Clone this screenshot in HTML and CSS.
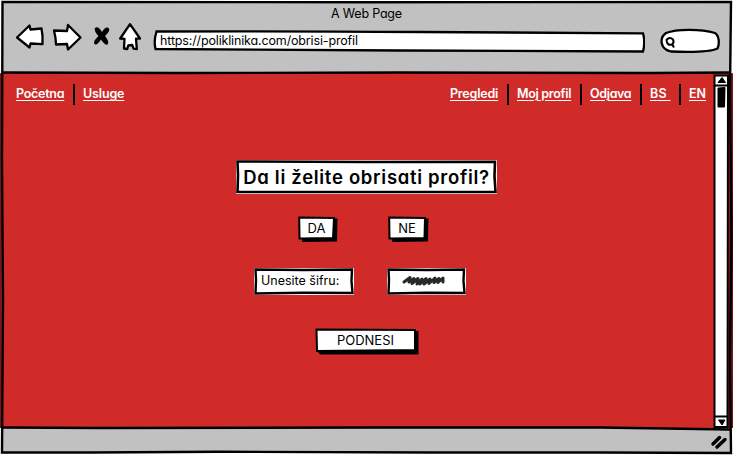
FILE: index.html
```html
<!DOCTYPE html>
<html lang="bs">
<head>
<meta charset="utf-8">
<title>A Web Page</title>
<link rel="stylesheet" href="styles.css">
</head>
<body>
<div class="window">
  <header class="chrome">
    <div class="title">A Web Page</div>
    <div class="toolbar">
      <svg class="tools" width="128" height="32" viewBox="15 21 128 32">
        <g fill="#fff" stroke="#000" stroke-width="2.300" stroke-linejoin="round">
          <path d="M17 37.500 29.500 25.500 30.500 29.500 41.500 28.500 42.500 36 42.500 44.200 30.500 43.500 29.500 47.500Q24 43 17 37.500Z"/>
          <path d="M54 30.500 67 31 68 25 80.500 37.500 68 49.500 67 44 56 44.500 55.500 38Z"/>
          <path d="M130 24.200 140 38.500 136 38.700 136.800 49 133.500 48.700 132.200 45 128.300 45.300 127.300 49 124 48.500 124.500 38.800 120.200 38.500Z"/>
        </g>
        <path d="M95 28C97 26 99.500 27.500 102 32C104 28.500 107 26 109 28.500C110 31 107.500 33.500 105 36C107 38.500 109.500 42 107.500 44.500C105.500 45.500 103 42.500 101 39.500C99 42.500 96 46 94.500 44C93 41.500 96 38.500 98.500 36C96 33.500 94 30 95 28Z"/>
      </svg>
      <div class="address">
        <svg class="frame" width="492" height="23" viewBox="153 30 492 23"><path d="M156.500 31.500 Q280 31 420 32 T643 33.300 Q645.500 42 643 51.500 Q520 51 400 50.500 T155.500 49 Q153.500 41 156.500 31.500Z" fill="#fff" stroke="#000" stroke-width="2.300"/></svg>
        <span class="url">https://poliklinika.com/obrisi-profil</span>
      </div>
      <svg class="search" width="60" height="26" viewBox="660 28 60 26">
        <path d="M666 33C676 29 700 28.500 715 33C719.500 36 719.500 44 717.500 48.500C708 53 683 52 671 51.500C660 49 659 38 666 33Z" fill="#fff" stroke="#000" stroke-width="2.300"/>
        <path d="M666.500 40Q669.500 36.500 673 39.500Q674.500 42.500 672 44.500Q667 46 666.500 40ZM672 44 674 47.500" fill="none" stroke="#000" stroke-width="2"/>
      </svg>
    </div>
  </header>
  <main class="page">
    <div class="content">
      <nav class="nav">
        <div class="group"><a class="pocetna">Početna</a><a class="usluge">Usluge</a></div>
        <div class="group"><a class="pregledi">Pregledi</a><a class="profil">Moj profil</a><a class="odjava">Odjava</a><a class="bs">BS&nbsp;</a><a class="en">EN</a></div>
      </nav>
      <section class="form">
        <div class="box heading">
          <svg class="frame" width="261" height="34" viewBox="0 0 261 34"><path d="M0 0H261V34H0Z" fill="#fff"/><path d="M1.500 1.500 130 2 259 1.800 258.500 16 259.500 32 130 32 1.500 32 2 15Z" fill="#fff" stroke="#000" stroke-width="2.600"/></svg>
          <h1>Da li želite obrisati profil?</h1>
        </div>
        <div class="row choices">
          <button class="box da"><svg class="frame" width="40" height="26" viewBox="0 0 40 26"><path d="M4 3 39.500 2.500 39 25.500 4 26Z"/><path d="M1.200 1.500 36 2 35 22 1.500 22.500Z" fill="#fff" stroke="#000" stroke-width="2"/></svg><span>DA</span></button>
          <button class="box ne"><svg class="frame" width="41" height="26" viewBox="0 0 41 26"><path d="M4 3 40.500 2.500 40 25.500 4 26Z"/><path d="M1.200 1.500 37 2 36.500 22 1.500 22.500Z" fill="#fff" stroke="#000" stroke-width="2"/></svg><span>NE</span></button>
        </div>
        <div class="row fields">
          <label class="box label"><svg class="frame" width="100" height="27" viewBox="0 0 100 27"><path d="M0 0H100V27H0Z" fill="#fff"/><path d="M1.500 1.500 50 2 98 1.500 97.500 13 98.500 25 50 24.800 1.500 25.500 2 12Z" fill="#fff" stroke="#000" stroke-width="2.400"/></svg><span>Unesite šifru:</span></label>
          <div class="box secret"><svg class="frame" width="79" height="27" viewBox="0 0 79 27"><path d="M0 0H79V27H0Z" fill="#fff"/><path d="M1.500 1.500 40 2 77 1.500 76.500 13 77.500 25 40 24.800 1.500 25.500 2 12Z" fill="#fff" stroke="#000" stroke-width="2.400"/><path d="M17 14 23 9.500 22 14 27 10.500 25 15.500 31 10.500 30 16 35 11 33 16 39 10.500 37 16 43 11 42 15.500 48 10 47 14.500 52 10.500 51 14.500 56 10 56 14" fill="none" stroke="#292929" stroke-width="3" stroke-linecap="round" stroke-linejoin="round"/></svg></div>
        </div>
        <button class="box submit"><svg class="frame" width="104" height="27" viewBox="0 0 104 27"><path d="M4 3 103.500 3 103.500 26.500 5 26.500 3 24Z"/><path d="M1.500 1.500 100 2 100 22 52 22.500 2 23Z" fill="#fff" stroke="#000" stroke-width="2"/></svg><span>PODNESI</span></button>
      </section>
    </div>
    <svg class="scrollbar" width="20" height="355" viewBox="713 73 20 355">
      <path d="M730 74H733V428H728Z" fill="#7c1518"/>
      <path d="M714.500 75.500H728L727.500 427H714.500Z" fill="#fff" stroke="#000" stroke-width="2"/>
      <path d="M714.500 85.500H728M714.500 416.500H728" stroke="#000" stroke-width="2"/>
      <path d="M718 82.500 722 77.500 725.500 82.500ZM718.500 420H725L722 425Z" stroke="#000"/>
      <path d="M718.500 88.500 724.500 88 724 106.500 718.500 106.500Z" stroke="#000" stroke-width="2" stroke-linejoin="round"/>
    </svg>
  </main>
  <footer class="status"><svg width="18" height="16" viewBox="710 434 18 16"><path d="M713 444 719.500 437.500M717 447 725 439.500" stroke="#000" stroke-width="3.500" stroke-linecap="round"/></svg></footer>
  <svg class="outline" width="733" height="455" viewBox="0 0 733 455">
    <path d="M0 74H1.500V428H0Z" fill="#7c1518"/>
    <g fill="none" stroke="#000" stroke-width="2.400">
      <path d="M2.500 2 370 2.200 731 2 730 90 731.500 240 730 360 731 453 600 452.500 430 452.500 220 451.700 90 452.500 2 452.500 3 300 2 160Z"/>
      <path d="M3 72.500 180 73 400 72.500 650 73 731 72.500"/>
      <path d="M3 427.500 100 428 380 427.500 600 427.500 730 429.500"/>
    </g>
  </svg>
</div>
</body>
</html>
```
FILE: styles.css
```css
* { box-sizing: border-box; }
body { margin: 0; font-family: Inter, "Noto Sans", sans-serif; font-feature-settings: "cv11" 1; color: #000; }
.window { position: relative; width: 733px; height: 455px; display: flex; flex-direction: column; overflow: hidden; background: #fff; }
.chrome { height: 71px; margin: 2px 2px 0; flex: none; background: #c1c1c1; }
.title { height: 19px; padding-top: 3px; text-align: center; font-size: 12.5px; line-height: 17px; letter-spacing: -.2px; }
.toolbar { display: flex; align-items: flex-start; padding-left: 13px; }
.tools { flex: none; }
.address { position: relative; width: 492px; height: 23px; margin: 9px 15px 0 10px; padding-left: 7px; }
.frame { position: absolute; left: 0; top: 0; }
.url { position: relative; display: block; font-size: 12.5px; line-height: 22px; letter-spacing: -.15px; white-space: nowrap; }
.search { flex: none; margin-top: 7px; }
.page { flex: none; height: 355px; display: flex; background: #d02b29; }
.content { width: 713px; display: flex; flex-direction: column; }
.nav { display: flex; justify-content: space-between; padding: 11px 7px 0 16px; }
.group { display: flex; }
.nav a { color: #fff; font-size: 12.5px; font-weight: 600; line-height: 20px; height: 21px; white-space: nowrap; text-decoration: underline; text-decoration-thickness: 1px; text-underline-offset: 2px; }
.nav a + a { margin-left: 9px; padding-left: 8px; border-left: 2px solid #000; }
.pocetna { width: 48px; letter-spacing: -.27px; }
.usluge { width: 52px; letter-spacing: -.15px; }
.pregledi { width: 48px; letter-spacing: -.2px; }
.profil { width: 64px; letter-spacing: -.3px; }
.odjava { width: 51px; letter-spacing: -.35px; }
.bs { width: 30px; letter-spacing: .3px; }
.en { width: 27px; }
.form { width: 261px; margin: 55px 0 0 236px; display: flex; flex-direction: column; }
.box { position: relative; display: flex; align-items: center; justify-content: center; border: 0; padding: 0; background: none; font-family: inherit; font-feature-settings: inherit; color: inherit; font-size: 13px; white-space: nowrap; }
.box span, .box h1 { position: relative; }
.heading { height: 34px; }
.heading h1 { margin: 0; font-size: 18.5px; font-weight: 600; line-height: 34px; letter-spacing: .7px; }
.row { display: flex; }
.choices { margin: 22px 0 0 62px; gap: 50px; }
.da { width: 40px; height: 26px; padding: 0 3px 3px 0; }
.ne { width: 41px; height: 26px; padding: 0 3px 3px 0; }
.fields { margin: 26px 0 0 18px; gap: 33px; }
.label { width: 100px; height: 27px; justify-content: flex-start; padding: 0 0 2px 7px; font-size: 12.5px; }
.secret { width: 79px; height: 27px; }
.submit { width: 104px; height: 27px; margin: 33px 0 0 79px; padding: 0 3px 3px 0; }
.scrollbar { flex: none; }
.status { height: 25px; margin: 0 2px; background: #c1c1c1; display: flex; justify-content: flex-end; padding: 6px 3px 0 0; }
.outline { position: absolute; left: 0; top: 0; pointer-events: none; }
```
